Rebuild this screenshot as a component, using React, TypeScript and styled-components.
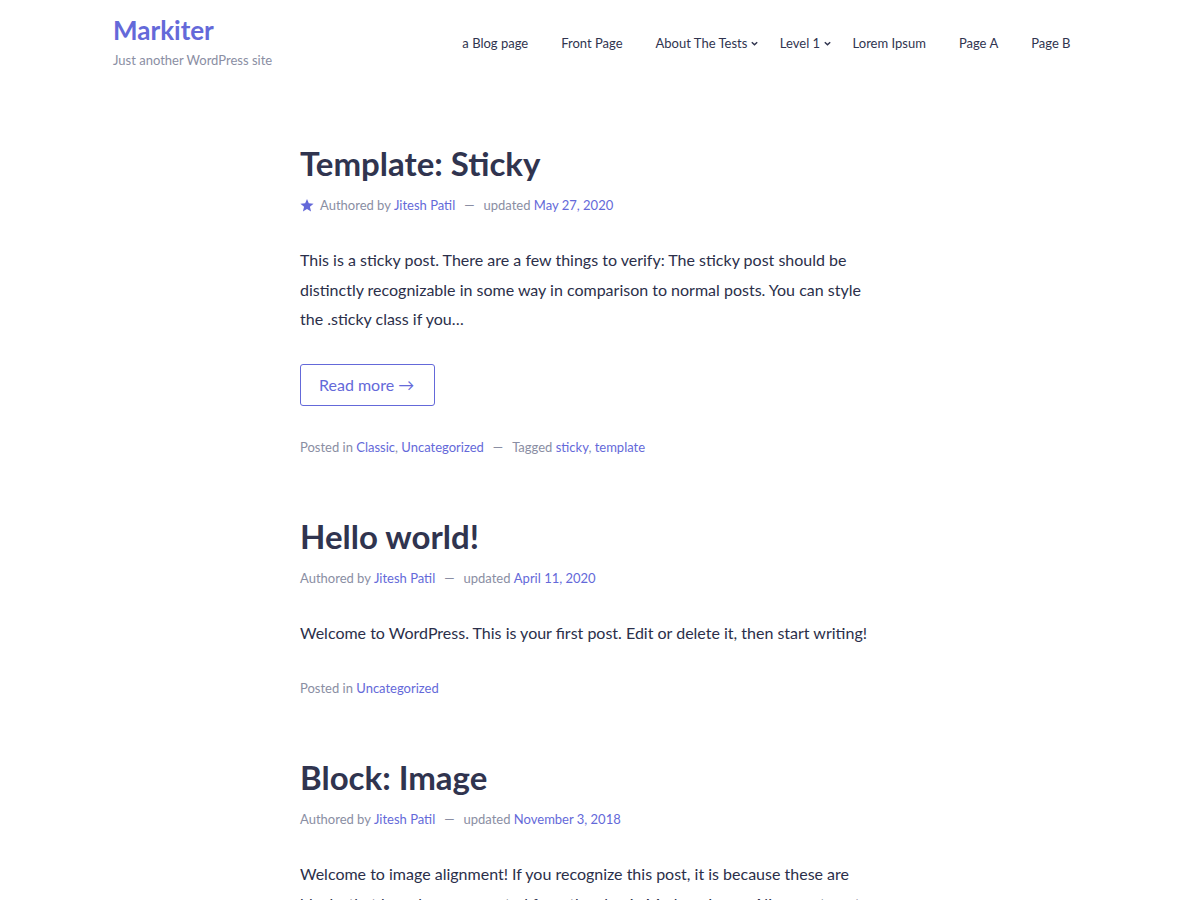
import styled, { createGlobalStyle } from "styled-components";

const GlobalStyle = createGlobalStyle`
  body {
    margin: 0;
    background: #ffffff;
    font-family: "Lato", "Open Sans", sans-serif;
    color: #2b2f4a;
  }
  a {
    text-decoration: none;
  }
`;

const accent = "#6469d9";
const muted = "#8a8ea3";
const heading = "#30344f";

const Header = styled.header`
  max-width: 974px;
  margin: 0 auto;
  display: flex;
  justify-content: space-between;
  align-items: flex-start;
  padding-top: 14px;
`;

const Branding = styled.div`
  display: flex;
  flex-direction: column;
`;

const SiteTitle = styled.a`
  font-size: 26px;
  font-weight: 700;
  line-height: 32px;
  color: ${accent};
`;

const Tagline = styled.p`
  margin: 6px 0 0;
  font-size: 13px;
  color: ${muted};
`;

const Nav = styled.nav`
  display: flex;
  align-items: center;
  padding-top: 21px;
`;

const NavItem = styled.a<{ $dropdown?: boolean }>`
  display: flex;
  align-items: center;
  font-size: 13px;
  color: ${heading};
  padding: 0 ${(p) => (p.$dropdown ? "4px" : "16.5px")} 0 16.5px;
`;

const Chevron = styled.svg`
  margin-left: 3px;
  width: 9px;
  height: 9px;
`;

const Main = styled.main`
  width: 600px;
  margin: 0 auto;
  padding: 73px 0 0;
`;

const Post = styled.article`
  margin-bottom: 57px;
`;

const Title = styled.h2`
  margin: 0;
  font-size: 33px;
  line-height: 44px;
  font-weight: 700;
  color: ${heading};
`;

const Meta = styled.div`
  display: flex;
  align-items: center;
  margin-top: 10px;
  font-size: 13px;
  line-height: 20px;
  color: ${muted};
`;

const Link = styled.a`
  color: ${accent};
`;

const Dash = styled.span`
  margin: 0 9px;
`;

const Star = styled.svg`
  width: 14px;
  height: 14px;
  margin-right: 6px;
  fill: ${accent};
`;

const Excerpt = styled.p`
  margin: 30px 0 0;
  max-width: 580px;
  font-size: 16px;
  line-height: 29.5px;
  color: #2b2f4a;
`;

const ReadMore = styled.a`
  display: inline-flex;
  align-items: center;
  margin-top: 30px;
  height: 42px;
  box-sizing: border-box;
  padding: 0 20px 0 18px;
  border: 1.5px solid ${accent};
  border-radius: 3px;
  font-size: 16px;
  color: ${accent};
`;

const Footer = styled.div`
  margin-top: 31px;
  font-size: 13px;
  line-height: 20px;
  color: ${muted};
`;

const ChevronIcon = () => (
  <Chevron viewBox="0 0 10 10">
    <path d="M2 3.5 L5 6.5 L8 3.5" stroke={heading} strokeWidth="1.6" fill="none" />
  </Chevron>
);

const navLinks = [
  { label: "a Blog page" },
  { label: "Front Page" },
  { label: "About The Tests", dropdown: true },
  { label: "Level 1", dropdown: true },
  { label: "Lorem Ipsum" },
  { label: "Page A" },
  { label: "Page B" },
];

export default function App() {
  return (
    <>
      <GlobalStyle />
      <Header>
        <Branding>
          <SiteTitle href="#">Markiter</SiteTitle>
          <Tagline>Just another WordPress site</Tagline>
        </Branding>
        <Nav>
          {navLinks.map((l) => (
            <NavItem key={l.label} href="#" $dropdown={l.dropdown}>
              {l.label}
              {l.dropdown && <ChevronIcon />}
            </NavItem>
          ))}
        </Nav>
      </Header>
      <Main>
        <Post>
          <Title>Template: Sticky</Title>
          <Meta>
            <Star viewBox="0 0 24 24">
              <path d="M12 1.5l3.1 7.6 8.2.6-6.3 5.3 2 8-7-4.3-7 4.3 2-8L.7 9.7l8.2-.6z" />
            </Star>
            Authored by&nbsp;<Link href="#">Jitesh Patil</Link>
            <Dash>—</Dash>
            updated&nbsp;<Link href="#">May 27, 2020</Link>
          </Meta>
          <Excerpt>
            This is a sticky post. There are a few things to verify: The sticky post should be
            distinctly recognizable in some way in comparison to normal posts. You can style
            the .sticky class if you…
          </Excerpt>
          <ReadMore href="#">Read more →</ReadMore>
          <Footer>
            Posted in <Link href="#">Classic</Link>, <Link href="#">Uncategorized</Link>
            <Dash>—</Dash>
            Tagged <Link href="#">sticky</Link>, <Link href="#">template</Link>
          </Footer>
        </Post>
        <Post>
          <Title>Hello world!</Title>
          <Meta>
            Authored by&nbsp;<Link href="#">Jitesh Patil</Link>
            <Dash>—</Dash>
            updated&nbsp;<Link href="#">April 11, 2020</Link>
          </Meta>
          <Excerpt>
            Welcome to WordPress. This is your first post. Edit or delete it, then start writing!
          </Excerpt>
          <Footer>
            Posted in <Link href="#">Uncategorized</Link>
          </Footer>
        </Post>
        <Post>
          <Title>Block: Image</Title>
          <Meta>
            Authored by&nbsp;<Link href="#">Jitesh Patil</Link>
            <Dash>—</Dash>
            updated&nbsp;<Link href="#">November 3, 2018</Link>
          </Meta>
          <Excerpt>
            Welcome to image alignment! If you recognize this post, it is because these are
            blocks that have been converted from the classic Markup: Image Alignment post.
          </Excerpt>
        </Post>
      </Main>
    </>
  );
}
